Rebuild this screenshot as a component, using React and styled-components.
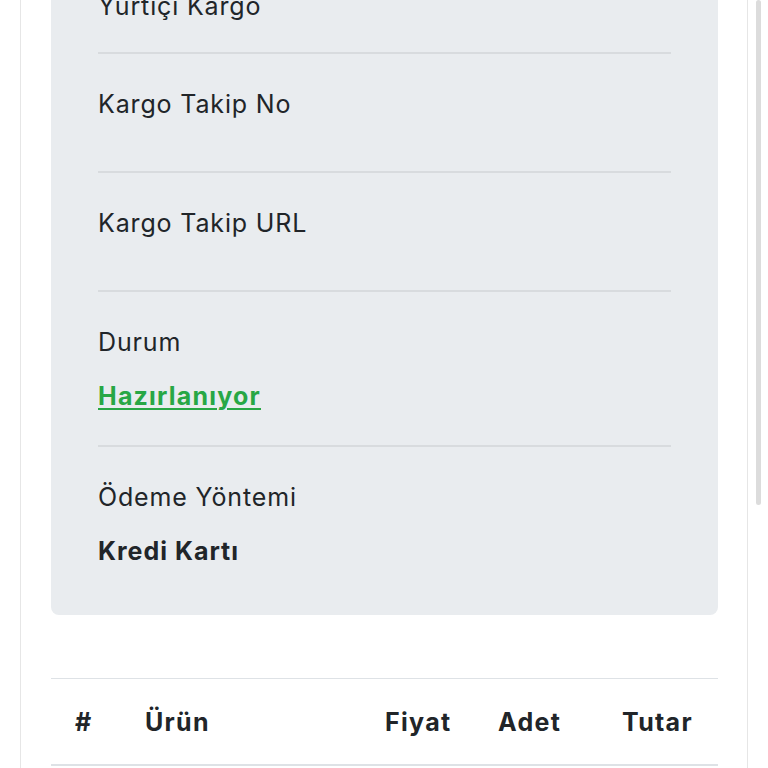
import React from "react";
import styled, { createGlobalStyle } from "styled-components";

const GlobalStyle = createGlobalStyle`
  html, body {
    margin: 0;
    padding: 0;
    background: #ffffff;
    overflow: hidden;
  }
  body {
    font-family: "Inter", "Noto Sans", sans-serif;
    color: #212529;
  }
  * {
    box-sizing: border-box;
  }
`;

const Page = styled.main`
  padding: 0 20px;
`;

const Card = styled.section`
  margin-top: -146px;
  border: 1px solid #e6e6e6;
  border-radius: 8px;
  padding: 30px 29px 30px 30px;
  background: #fff;
`;

const InfoPanel = styled.div`
  background: #e9ecef;
  border-radius: 8px;
  padding: 16px 47px 15px 47px;
`;

const InfoRow = styled.div`
  padding: 26px 0 31px;
  border-top: 2px solid #d8dbde;

  &:first-child {
    border-top: none;
    padding-top: 27px;
    padding-bottom: 28px;
  }
`;

const Label = styled.p`
  margin: 0 0 12px;
  font-size: 25px;
  line-height: 48px;
  letter-spacing: 0.85px;
  font-weight: 400;
  color: #212529;
`;

const Value = styled.p`
  margin: 0;
  font-size: 25px;
  line-height: 36px;
  letter-spacing: ${(p) => (p.$bold ? "1px" : "0.85px")};
  font-weight: ${(p) => (p.$bold ? 700 : 400)};
  color: #212529;
`;

const StatusLink = styled.a`
  color: #28a745;
  font-weight: 700;
  letter-spacing: 1.2px;
  text-decoration: underline;
  text-underline-offset: 3px;
  text-decoration-thickness: 2px;
`;

const Table = styled.table`
  width: 100%;
  margin-top: 63px;
  border-collapse: collapse;
  table-layout: fixed;
`;

const HeadCell = styled.th`
  width: ${(p) => p.$w || "auto"};
  padding: 25px 24px 24px;
  text-align: left;
  font-size: 25px;
  line-height: 36px;
  letter-spacing: 1.3px;
  font-weight: 700;
  color: #212529;
  border-top: 1px solid #dee2e6;
  border-bottom: 2px solid #dee2e6;
  white-space: nowrap;
`;

const ScrollThumb = styled.div`
  position: fixed;
  top: 0;
  right: 7px;
  width: 5px;
  height: 505px;
  border-radius: 3px;
  background: #dcdcdc;
`;

const rows = [
  { label: "Kargo Firması", value: "Yurtiçi Kargo" },
  { label: "Kargo Takip No", value: "" },
  { label: "Kargo Takip URL", value: "" },
  { label: "Durum", status: "Hazırlanıyor" },
  { label: "Ödeme Yöntemi", value: "Kredi Kartı", bold: true },
];

export default function App() {
  return (
    <>
      <GlobalStyle />
      <Page>
        <Card>
          <InfoPanel>
            {rows.map((r) => (
              <InfoRow key={r.label}>
                <Label>{r.label}</Label>
                {r.status ? (
                  <Value>
                    <StatusLink href="#">{r.status}</StatusLink>
                  </Value>
                ) : (
                  r.value && <Value $bold={r.bold}>{r.value}</Value>
                )}
              </InfoRow>
            ))}
          </InfoPanel>
          <Table>
            <thead>
              <tr>
                <HeadCell $w="70px">#</HeadCell>
                <HeadCell $w="240px">Ürün</HeadCell>
                <HeadCell $w="113px">Fiyat</HeadCell>
                <HeadCell $w="124px">Adet</HeadCell>
                <HeadCell>Tutar</HeadCell>
              </tr>
            </thead>
            <tbody />
          </Table>
        </Card>
      </Page>
      <ScrollThumb />
    </>
  );
}
